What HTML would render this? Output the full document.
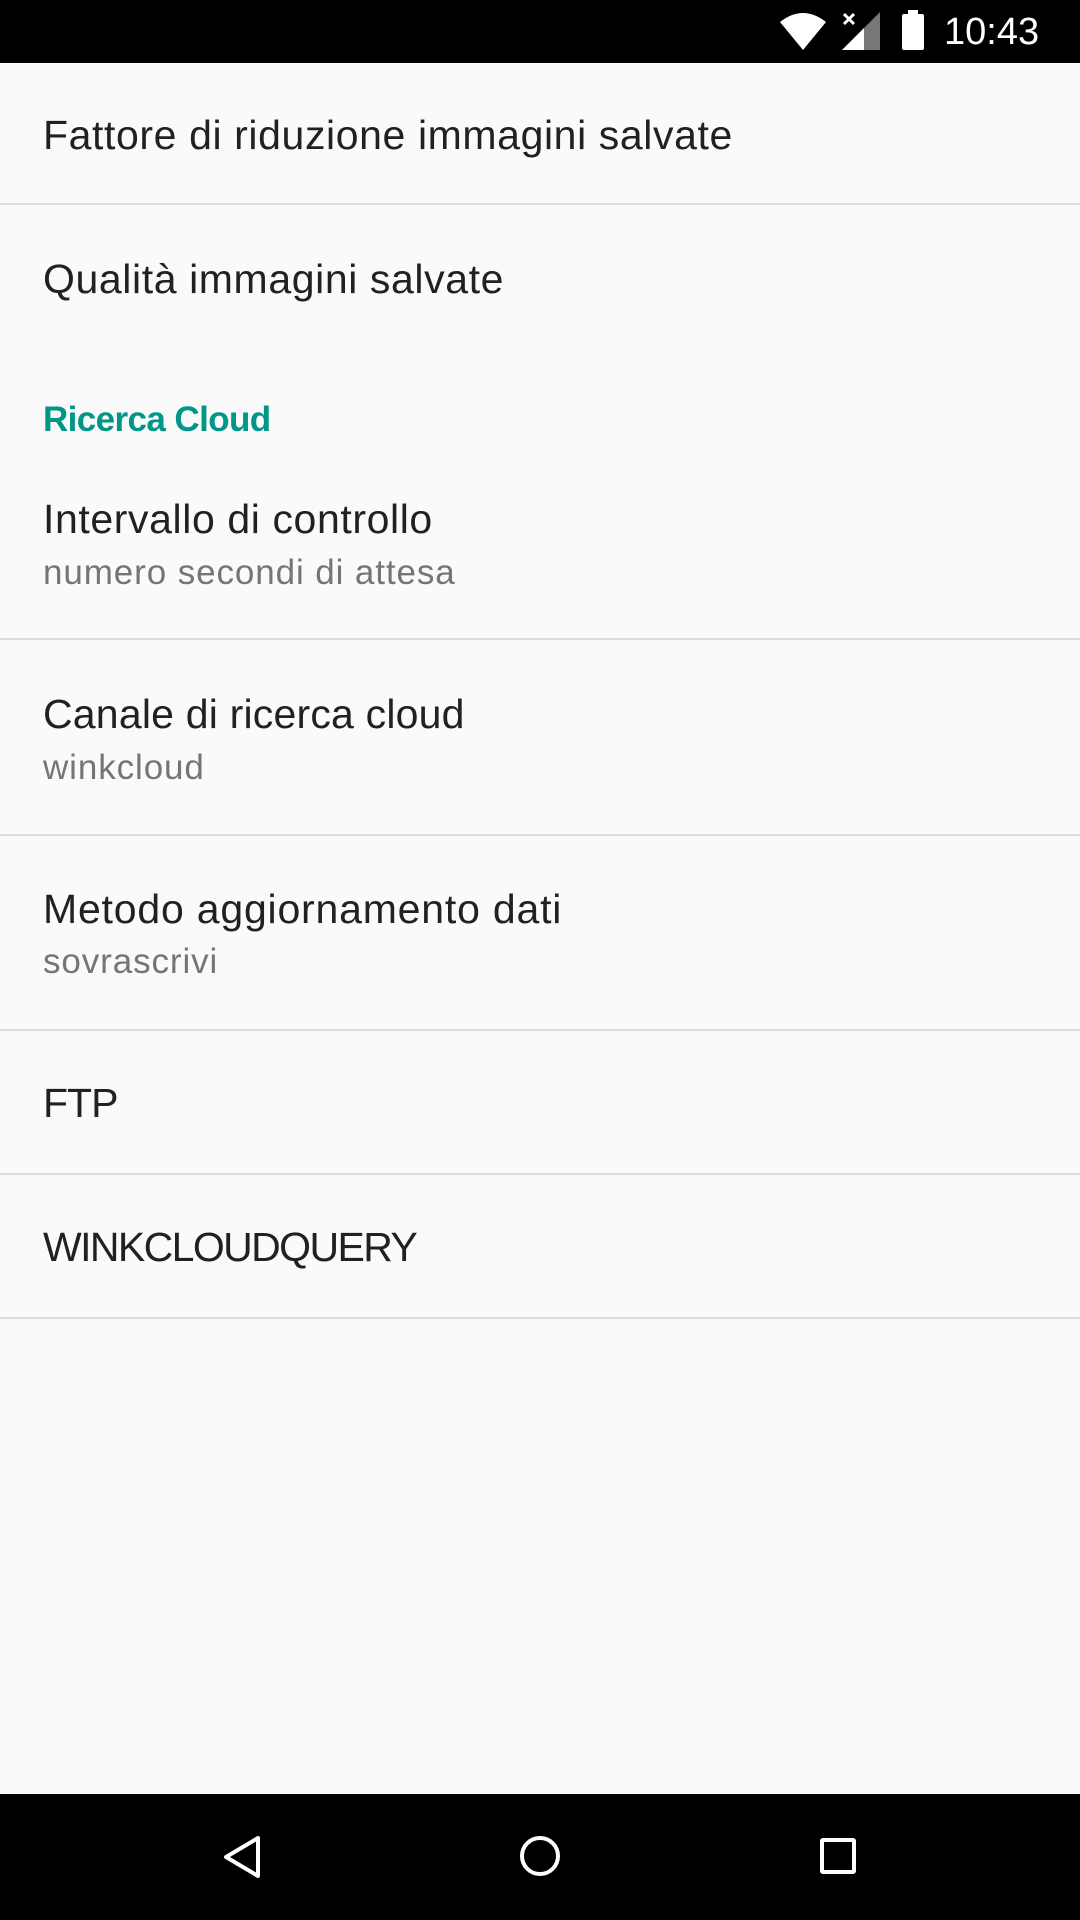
<!DOCTYPE html>
<html><head><meta charset="utf-8"><style>
*{margin:0;padding:0;box-sizing:border-box}
body{width:1080px;height:1920px;background:#fafafa;position:relative;overflow:hidden;font-family:"Liberation Sans",Roboto,sans-serif}
.sb{position:absolute;left:0;top:0;width:1080px;height:63px;background:#000}
.nb{position:absolute;left:0;top:1794px;width:1080px;height:126px;background:#000}
.t{position:absolute;left:43px;font-size:41px;color:#212121;line-height:50px;white-space:nowrap;letter-spacing:0.6px}
.s{position:absolute;left:43px;font-size:35px;color:#757575;line-height:44px;letter-spacing:0.9px}
.c{position:absolute;left:43px;font-size:35px;color:#009688;font-weight:bold;line-height:44px;letter-spacing:-0.6px}
.d{position:absolute;left:0;width:1080px;height:2px;background:#dcdcdc}
</style></head><body>
<div class="sb">
<svg style="position:absolute;left:780px;top:12px" width="46" height="38" viewBox="0 0 46 38"><path d="M0 10 Q23 -8 46 10 L23 38 Z" fill="#fff"/></svg>
<svg style="position:absolute;left:842px;top:12px" width="38" height="38" viewBox="0 0 38 38"><path d="M38 0 L38 38 L0 38 Z" fill="#777"/><path d="M22 16 L22 38 L0 38 Z" fill="#fff"/><path d="M2 2 L12 12 M12 2 L2 12" stroke="#fff" stroke-width="3"/></svg>
<div style="position:absolute;left:902px;top:14px;width:22px;height:36px;background:#fff;border-radius:2px"></div>
<div style="position:absolute;left:908px;top:10px;width:10px;height:5px;background:#fff"></div>
<div style="position:absolute;left:944px;top:6px;font-size:38px;color:#fff;line-height:52px">10:43</div>
</div>
<div class="t" style="top:110px">Fattore di riduzione immagini salvate</div>
<div class="d" style="top:203px"></div>
<div class="t" style="top:254px">Qualità immagini salvate</div>
<div class="c" style="top:398px">Ricerca Cloud</div>
<div class="t" style="top:494px">Intervallo di controllo</div>
<div class="s" style="top:551px">numero secondi di attesa</div>
<div class="d" style="top:638px"></div>
<div class="t" style="top:689px;letter-spacing:0.2px">Canale di ricerca cloud</div>
<div class="s" style="top:746px">winkcloud</div>
<div class="d" style="top:834px"></div>
<div class="t" style="top:884px;letter-spacing:0.8px">Metodo aggiornamento dati</div>
<div class="s" style="top:940px">sovrascrivi</div>
<div class="d" style="top:1029px"></div>
<div class="t" style="top:1078px;letter-spacing:-1px">FTP</div>
<div class="d" style="top:1173px"></div>
<div class="t" style="top:1222px;letter-spacing:-1.6px">WINKCLOUDQUERY</div>
<div class="d" style="top:1317px"></div>
<div class="nb">
<svg style="position:absolute;left:220px;top:40px" width="44" height="46" viewBox="0 0 44 46"><path d="M38 4 L6 23 L38 42 Z" fill="none" stroke="#fff" stroke-width="4" stroke-linejoin="round"/></svg>
<div style="position:absolute;left:520px;top:42px;width:40px;height:40px;border:4px solid #fff;border-radius:50%"></div>
<div style="position:absolute;left:820px;top:44px;width:36px;height:36px;border:4px solid #fff;border-radius:3px"></div>
</div>
</body></html>
